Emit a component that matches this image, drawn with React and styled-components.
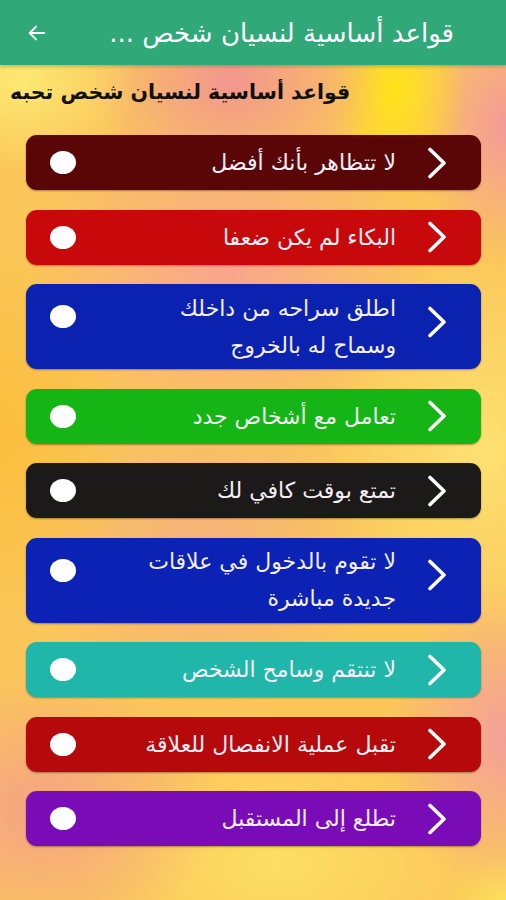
import React from 'react'
import styled, { createGlobalStyle } from 'styled-components'

const GlobalStyle = createGlobalStyle`
  html, body {
    margin: 0;
    padding: 0;
  }
  body {
    font-family: "DejaVu Sans", "Noto Sans", sans-serif;
  }
`

const rules = [
  { lines: ['لا تتظاهر بأنك أفضل'], color: '#5a0606' },
  { lines: ['البكاء لم يكن ضعفا'], color: '#c8090b' },
  { lines: ['اطلق سراحه من داخلك', 'وسماح له بالخروج'], color: '#0b21b0' },
  { lines: ['تعامل مع أشخاص جدد'], color: '#14b514' },
  { lines: ['تمتع بوقت كافي لك'], color: '#1c1919' },
  { lines: ['لا تقوم بالدخول في علاقات', 'جديدة مباشرة'], color: '#0b22b4' },
  { lines: ['لا تنتقم وسامح الشخص'], color: '#20b6a9' },
  { lines: ['تقبل عملية الانفصال للعلاقة'], color: '#b5090b' },
  { lines: ['تطلع إلى المستقبل'], color: '#7a0cb8' },
]

function BackArrow() {
  return (
    <svg width="22" height="22" viewBox="0 0 24 24" fill="none" stroke="#fff" strokeWidth="2" strokeLinecap="round" strokeLinejoin="round">
      <path d="M20 12H4" />
      <path d="M11 5l-7 7 7 7" />
    </svg>
  )
}

function Chevron() {
  return (
    <svg width="22" height="32" viewBox="0 0 22 32" fill="none" stroke="#fff" strokeWidth="3.6" strokeLinecap="round" strokeLinejoin="round">
      <path d="M4 2.5L18 16L4 29.5" />
    </svg>
  )
}

export default function App() {
  return (
    <>
      <GlobalStyle />
      <Page>
        <Header>
          <BackButton>
            <BackArrow />
          </BackButton>
          <Title dir="rtl">قواعد أساسية لنسيان شخص ...</Title>
        </Header>
        <Content>
          <Subtitle dir="rtl">قواعد أساسية لنسيان شخص تحبه</Subtitle>
          <List>
            {rules.map((r) => {
              const tall = r.lines.length > 1
              return (
                <Card key={r.lines[0]} $bg={r.color} $tall={tall}>
                  <Dot $tall={tall} />
                  <CardText dir="rtl">
                    {r.lines.map((l) => (
                      <Line key={l}>{l}</Line>
                    ))}
                  </CardText>
                  <ChevronWrap $tall={tall}>
                    <Chevron />
                  </ChevronWrap>
                </Card>
              )
            })}
          </List>
        </Content>
      </Page>
    </>
  )
}

const Page = styled.div`
  width: 506px;
  min-height: 900px;
  display: flex;
  flex-direction: column;
  background-color: #fbc75a;
  background-image:
    radial-gradient(ellipse 120px 90px at 4% 9%, #fde872 0%, rgba(253,232,114,0) 100%),
    radial-gradient(ellipse 150px 110px at 46% 9%, #f2968f 0%, rgba(242,150,143,0) 100%),
    radial-gradient(ellipse 70px 110px at 78% 10%, #ffe318 0%, rgba(255,227,24,0) 100%),
    radial-gradient(ellipse 90px 140px at 100% 14%, #f49a9a 0%, rgba(244,154,154,0) 100%),
    radial-gradient(ellipse 200px 160px at 45% 30%, #f7a58e 0%, rgba(247,165,142,0) 100%),
    radial-gradient(ellipse 140px 200px at 0% 48%, #fbbe3c 0%, rgba(251,190,60,0) 100%),
    radial-gradient(ellipse 160px 200px at 95% 50%, #fde171 0%, rgba(253,225,113,0) 100%),
    radial-gradient(ellipse 180px 160px at 40% 62%, #f5b07c 0%, rgba(245,176,124,0) 100%),
    radial-gradient(ellipse 180px 140px at 8% 90%, #f5a385 0%, rgba(245,163,133,0) 100%),
    radial-gradient(ellipse 200px 120px at 55% 96%, #fddf64 0%, rgba(253,223,100,0) 100%),
    radial-gradient(ellipse 120px 160px at 100% 82%, #f4a09a 0%, rgba(244,160,154,0) 100%),
    radial-gradient(ellipse 60px 60px at 100% 100%, #fde05a 0%, rgba(253,224,90,0) 100%);
`

const Header = styled.header`
  height: 65px;
  flex-shrink: 0;
  display: flex;
  align-items: center;
  justify-content: space-between;
  padding: 0 52px 0 26px;
  background: #31a878;
  box-shadow: 0 2px 3px rgba(0, 0, 0, 0.18);
`

const BackButton = styled.div`
  display: flex;
  align-items: center;
  width: 22px;
  height: 22px;
`

const Title = styled.h1`
  margin: 0;
  font-size: 26px;
  font-weight: 400;
  color: #fff;
  white-space: nowrap;
  line-height: 32px;
`

const Content = styled.main`
  display: flex;
  flex-direction: column;
  padding: 12px 25px 40px 26px;
`

const Subtitle = styled.h2`
  margin: 0 0 0 -16px;
  height: 30px;
  font-size: 20.5px;
  font-weight: 700;
  color: #111;
  text-align: left;
  line-height: 30px;
  white-space: nowrap;
`

const List = styled.div`
  display: flex;
  flex-direction: column;
  gap: 19.5px;
  margin-top: 28px;
`

const Card = styled.div`
  display: flex;
  align-items: center;
  height: ${({ $tall }) => ($tall ? '85px' : '55px')};
  box-sizing: border-box;
  padding: 0 33px 0 24px;
  border-radius: 11px;
  background: ${({ $bg }) => $bg};
  box-shadow: 0 1px 2px rgba(0, 0, 0, 0.35);
`

const Dot = styled.span`
  flex-shrink: 0;
  width: 26px;
  height: 23px;
  border-radius: 50%;
  background: #fff;
  align-self: ${({ $tall }) => ($tall ? 'flex-start' : 'center')};
  margin-top: ${({ $tall }) => ($tall ? '21px' : '0')};
`

const CardText = styled.div`
  flex: 1;
  display: flex;
  flex-direction: column;
  margin: 0 30px 0 20px;
  font-size: 22px;
  color: #f5eef7;
  text-align: right;
`

const Line = styled.span`
  display: block;
  height: 37px;
  line-height: 37px;
  white-space: nowrap;
`

const ChevronWrap = styled.div`
  display: flex;
  align-items: center;
  flex-shrink: 0;
  margin-top: ${({ $tall }) => ($tall ? '-10px' : '0')};
`
